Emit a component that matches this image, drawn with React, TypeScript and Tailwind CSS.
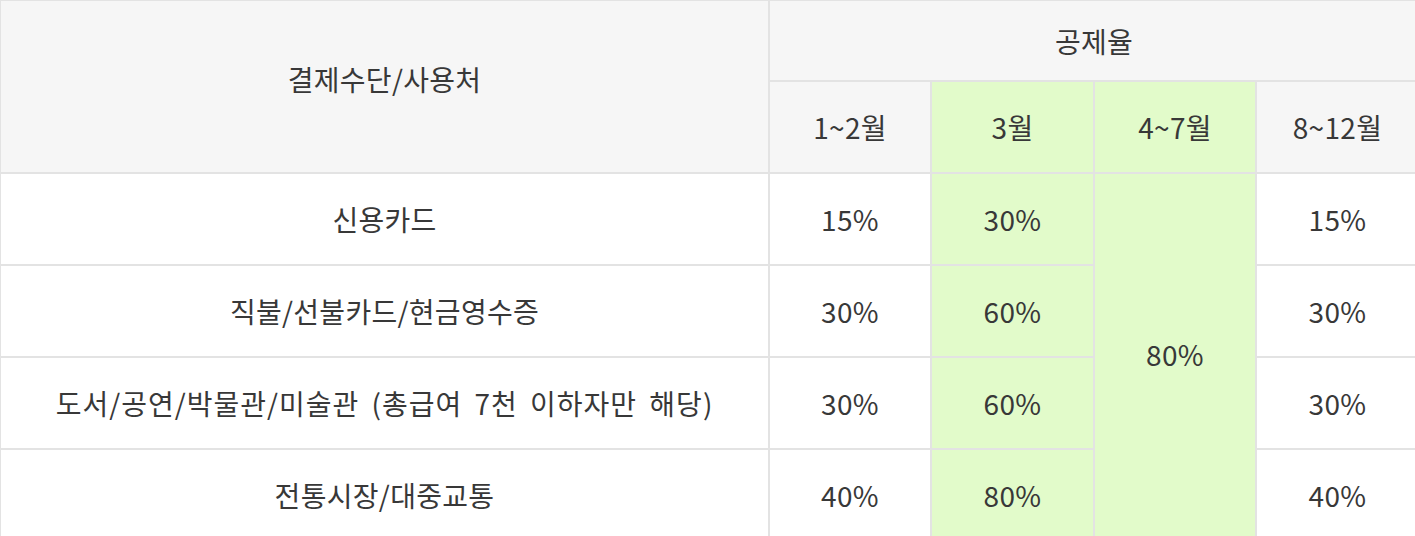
import * as React from "react"

const rows = [
    { name: "신용카드", a: "15%", b: "30%", d: "15%" },
    { name: "직불/선불카드/현금영수증", a: "30%", b: "60%", d: "30%" },
    { name: "도서/공연/박물관/미술관 (총급여 7천 이하자만 해당)", a: "30%", b: "60%", d: "30%" },
    { name: "전통시장/대중교통", a: "40%", b: "80%", d: "40%" },
]

const cell = "border-2 border-[#e3e3e3] text-center align-middle font-normal"
const head = "bg-[#f6f6f6]"
const green = "bg-[#e2fbca]"

export default function App() {
    return (
        <div
            className="w-[1415px] h-[536px] overflow-hidden bg-white text-[#383838] text-[28px] tracking-[0.3px] [word-spacing:5px]"
            style={{ fontFamily: '"Noto Sans CJK KR", "Noto Sans", sans-serif' }}
        >
            <table className="w-[1419px] -mt-[1px] -ml-[1px] border-collapse table-fixed">
                <colgroup>
                    <col className="w-[769px]" />
                    <col className="w-[162px]" />
                    <col className="w-[163px]" />
                    <col className="w-[162px]" />
                    <col className="w-[163px]" />
                </colgroup>
                <thead>
                    <tr className="h-[81px]">
                        <th rowSpan={2} className={`${cell} ${head} pb-[16px]`}>결제수단/사용처</th>
                        <th colSpan={4} className={`${cell} ${head}`}>공제율</th>
                    </tr>
                    <tr className="h-[92px]">
                        <th className={`${cell} ${head}`}>1~2월</th>
                        <th className={`${cell} ${green}`}>3월</th>
                        <th className={`${cell} ${green}`}>4~7월</th>
                        <th className={`${cell} ${head}`}>8~12월</th>
                    </tr>
                </thead>
                <tbody>
                    {rows.map((r, i) => (
                        <tr key={r.name} className="h-[92px]">
                            <td className={cell}>
                                {i === 2 ? <span className="tracking-[1px]">{r.name}</span> : r.name}
                            </td>
                            <td className={cell}>{r.a}</td>
                            <td className={`${cell} ${green}`}>{r.b}</td>
                            {i === 0 && (
                                <td rowSpan={4} className={`${cell} ${green} pb-[6px]`}>80%</td>
                            )}
                            <td className={cell}>{r.d}</td>
                        </tr>
                    ))}
                </tbody>
            </table>
        </div>
    )
}
